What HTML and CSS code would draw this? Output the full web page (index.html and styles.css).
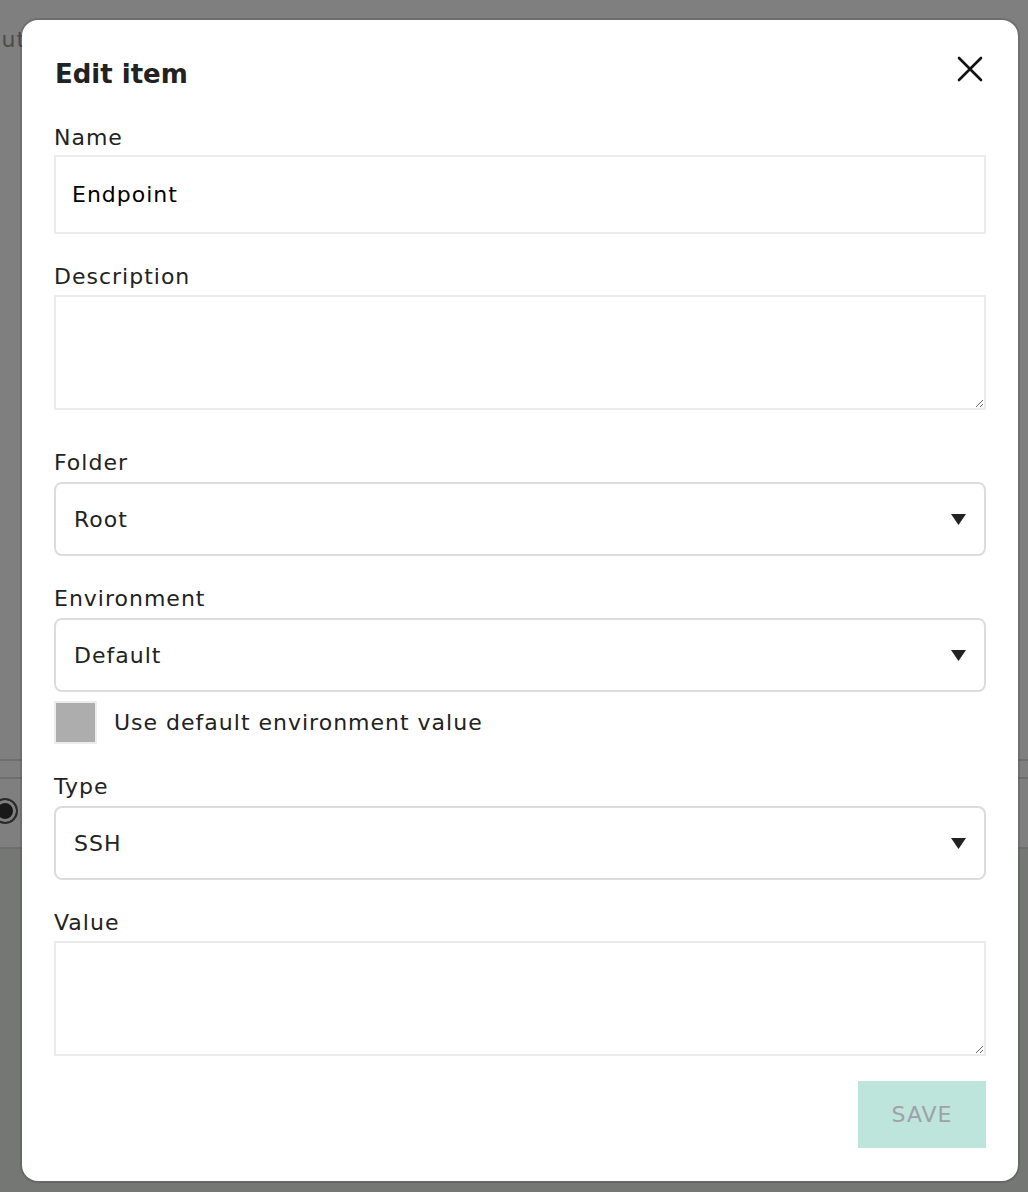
FILE: index.html
```html
<!DOCTYPE html>
<html>
<head>
<meta charset="utf-8">
<link rel="stylesheet" href="styles.css">
</head>
<body>
<div class="page">
  <div class="page-head">About</div>
  <div class="page-rows">
    <div class="row row-a"></div>
    <div class="row row-b"><span class="radio"></span></div>
  </div>
  <div class="page-rest"></div>
</div>
<div class="backdrop">
  <div class="modal">
    <div class="modal-head">
      <h2 class="title">Edit item</h2>
      <button class="close" aria-label="Close">
        <svg width="26" height="26" viewBox="0 0 26 26"><path d="M2 2 L24 24 M24 2 L2 24" stroke="#111" stroke-width="2.6" stroke-linecap="round" fill="none"/></svg>
      </button>
    </div>

    <label class="label">Name</label>
    <div class="text-input">Endpoint</div>

    <label class="label">Description</label>
    <textarea class="area"></textarea>

    <label class="label label-after-area">Folder</label>
    <div class="select"><span>Root</span><svg class="arrow" width="15" height="11" viewBox="0 0 15 11"><path d="M0 0 H15 L7.5 11 Z" fill="#222"/></svg></div>

    <label class="label">Environment</label>
    <div class="select"><span>Default</span><svg class="arrow" width="15" height="11" viewBox="0 0 15 11"><path d="M0 0 H15 L7.5 11 Z" fill="#222"/></svg></div>

    <div class="check-row">
      <span class="checkbox"></span>
      <span class="check-label">Use default environment value</span>
    </div>

    <label class="label">Type</label>
    <div class="select"><span>SSH</span><svg class="arrow" width="15" height="11" viewBox="0 0 15 11"><path d="M0 0 H15 L7.5 11 Z" fill="#222"/></svg></div>

    <label class="label">Value</label>
    <textarea class="area"></textarea>

    <div class="actions">
      <button class="save">SAVE</button>
    </div>
  </div>
</div>
</body>
</html>
```
FILE: styles.css
```css
* { box-sizing: border-box; }
html, body { margin: 0; padding: 0; }
body {
  width: 1028px;
  height: 1192px;
  overflow: hidden;
  position: relative;
  font-family: "DejaVu Sans", "Noto Sans", sans-serif;
  background: #ffffff;
}
.page { height: 1192px; display: flex; flex-direction: column; }
.page-head {
  padding-top: 27px;
  margin-left: -44px;
  font-size: 22px;
  letter-spacing: 1px;
  color: #999;
  height: 759px;
}
.page-rows { display: flex; flex-direction: column; }
.row { border-top: 2px solid #dcdcdc; }
.row-a { height: 18px; }
.row-b { height: 70px; display: flex; align-items: center; padding-bottom: 4px; }
.radio {
  width: 26px; height: 26px; border-radius: 50%;
  border: 2px solid #555; background: #333;
  box-shadow: inset 0 0 0 3px #fff;
  margin-left: -8px;
}
.page-rest { flex: 1; border-top: 2px solid #dcdcdc; background: #eaeeea; }

.backdrop {
  position: absolute; inset: 0;
  background: rgba(0, 0, 0, 0.5);
  padding: 20px 10px 0 22px;
}
.modal {
  width: 996px;
  height: 1161px;
  background: #fff;
  border-radius: 16px;
  box-shadow: 0 0 0 2px rgba(0,0,0,0.12);
  padding: 37px 32px 0 32px;
  display: flex;
  flex-direction: column;
}
.modal-head {
  display: flex;
  justify-content: space-between;
  align-items: flex-start;
  height: 34px;
  margin-bottom: 32px;
}
.title {
  margin: 0 0 0 1px;
  font-size: 26px;
  line-height: 34px;
  font-weight: bold;
  color: #222;
}
.close {
  border: 0; background: none; padding: 0;
  width: 26px; height: 26px;
  margin-top: -1px; margin-right: 3px;
}
.close svg { display: block; }
.label {
  display: block;
  font-size: 22px;
  letter-spacing: 1px;
  line-height: 28px;
  color: #222;
  padding-top: 1px;
  margin-bottom: 3px;
}
.text-input {
  height: 79px;
  border: 2px solid #ebebeb;
  padding: 0 16px;
  display: flex; align-items: center;
  font-size: 22px;
  letter-spacing: 1px;
  color: #000;
  margin-bottom: 28px;
}
.area {
  display: block;
  width: 100%;
  height: 115px;
  border: 2px solid #ebebeb;
  border-radius: 0;
  margin: 1px 0 0 0;
  font-family: inherit;
  resize: vertical;
  outline: none;
}
.label-after-area { margin-top: 38px; }
.select {
  height: 74px;
  border: 2px solid #dcdcdc;
  border-radius: 8px;
  padding: 0 18px;
  display: flex; align-items: center; justify-content: space-between;
  font-size: 22px;
  letter-spacing: 1px;
  color: #222;
}
.label + .select { margin-top: 2px; }
.select + .label { margin-top: 28px; }
.arrow { display: block; margin-right: 0; }
.check-row {
  display: flex; align-items: center;
  margin-top: 9px;
  margin-bottom: 28px;
}
.checkbox {
  width: 43px; height: 43px;
  background: #adadad;
  border: 2px solid #ececec;
}
.check-label {
  margin-left: 17px;
  font-size: 22px;
  letter-spacing: 1px;
  color: #222;
}
.area + .actions { margin-top: 25px; }
.actions { display: flex; justify-content: flex-end; }
.save {
  width: 128px; height: 67px;
  border: 0;
  background: #bde5dc;
  color: #a0a0a8;
  font-family: inherit;
  font-size: 22px;
  letter-spacing: 1px;
  margin-right: 0;
}
```
